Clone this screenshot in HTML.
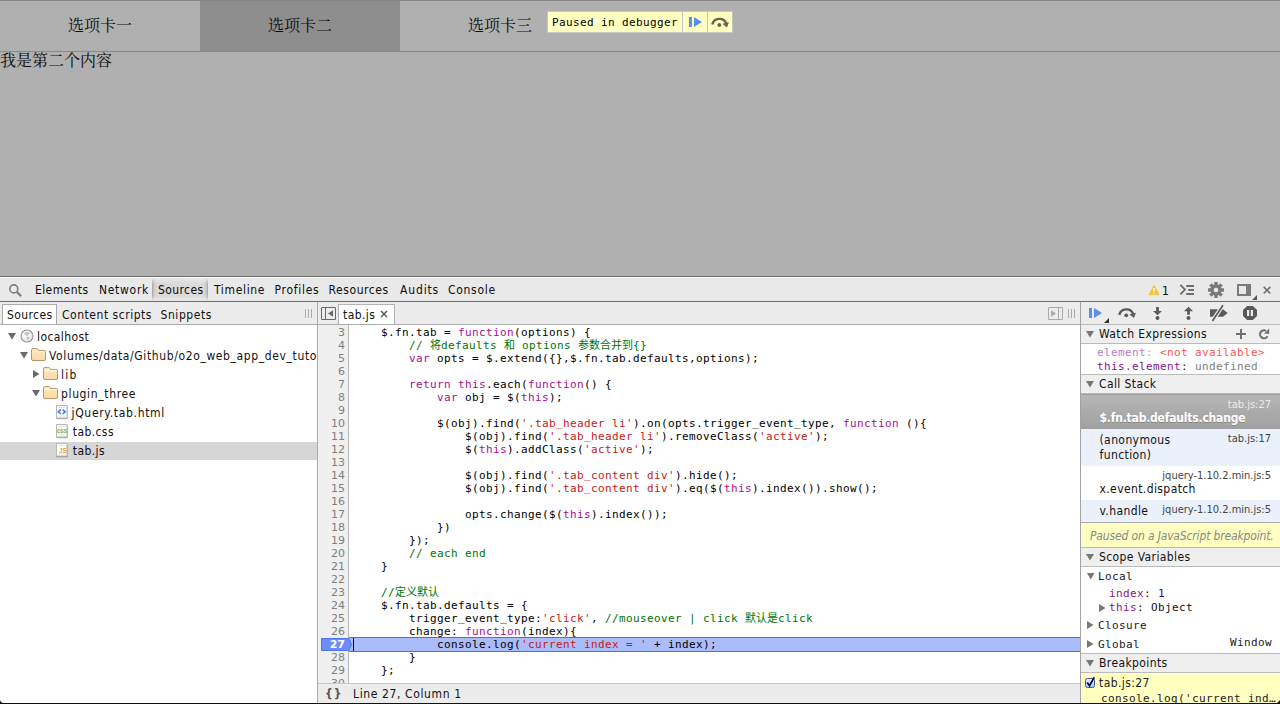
<!DOCTYPE html>
<html lang="zh">
<head>
<meta charset="utf-8">
<title>tab</title>
<style>
html,body{margin:0;padding:0;}
body{width:1280px;height:704px;overflow:hidden;position:relative;background:#fff;
  font-family:"DejaVu Sans Condensed","Liberation Sans","Noto Sans CJK SC",sans-serif;font-size:12px;color:#111;letter-spacing:.4px;}
*{box-sizing:border-box;}
svg{position:absolute;overflow:visible;z-index:3;}
.mono{font-family:"DejaVu Sans Mono","Liberation Mono","Noto Sans CJK SC",monospace;font-size:11px;letter-spacing:.377px;white-space:pre;}
/* ---------- page ---------- */
#page{position:absolute;left:0;top:0;width:1280px;height:276px;background:#b0b0b0;letter-spacing:0;
  font-family:"Liberation Serif","Noto Serif CJK SC",serif;font-size:16px;color:#0a0a0a;}
#page .hdr{position:absolute;left:0;top:0;width:1280px;height:52px;border-top:1px solid #858585;border-bottom:1px solid #8a8a8a;}
#page .hdr div{position:absolute;top:0;width:200px;height:50px;line-height:50px;text-align:center;}
#page .hdr .on{background:#8e8e8e;}
#page .cnt{position:absolute;left:0;top:52px;line-height:18px;}
#paused{position:absolute;left:547px;top:11px;height:22px;width:186px;background:#ffffc2;border:1px solid #c6c6c6;color:#000;}
#paused span{position:absolute;left:4px;top:1px;line-height:20px;}
#paused i{position:absolute;top:0;width:1px;height:20px;background:#c6c6c6;}
/* ---------- devtools ---------- */
#dt{position:absolute;left:0;top:276px;width:1280px;height:428px;background:#fff;border-top:1px solid #6e6e6e;}
#tb{position:absolute;left:0;top:0;width:1280px;height:25px;background:#e9e9e9;box-shadow:inset 0 1px 0 #fafafa;border-bottom:1px solid #6c6c6c;}
#tb .t{position:absolute;top:1px;line-height:24px;white-space:pre;color:#0c0c0c;}
#tb .sel{position:absolute;left:152px;top:1px;width:56px;height:23px;
  background:linear-gradient(#e9e9e9,rgba(233,233,233,0) 6px,rgba(233,233,233,0) 17px,#e9e9e9),
  linear-gradient(to right,rgba(0,0,0,.30),rgba(0,0,0,.12) 2px,rgba(0,0,0,.07) 5px,rgba(0,0,0,.06) 51px,rgba(0,0,0,.12) 54px,rgba(0,0,0,.30));}
/* second row */
.row2{position:absolute;top:25px;height:23px;background:#ececec;border-bottom:1px solid #aaa;}
#nav{position:absolute;left:0;top:25px;width:318px;height:402px;border-right:1px solid #aaa;background:#fff;}
#nav .tabs{left:0;top:0;width:317px;}
.tt{position:absolute;top:2px;line-height:22px;color:#111;white-space:pre;}
#nav .tabs .cur{position:absolute;left:2px;top:2px;width:55px;height:20px;background:#fff;border:1px solid #aaa;border-bottom:none;}
.tree .r{position:absolute;left:0;width:317px;height:19px;line-height:19px;white-space:pre;overflow:hidden;}
.tree .r span{position:absolute;top:1px;}
.tree .r.sel{background:linear-gradient(#d6d6d6,#d6d6d6) 0 1px/100% 18px no-repeat;}
/* editor */
#ed{position:absolute;left:318px;top:25px;width:762px;height:402px;background:#fff;}
#ed .tabs{left:0;top:0;width:762px;}
#ed .ftab{position:absolute;left:20px;top:2px;width:57px;height:20px;background:#fff;border:1px solid #b4b4b4;border-bottom:none;}
#code{position:absolute;left:0;top:23px;width:762px;height:358px;overflow:hidden;background:#fff;}
#code .gut{position:absolute;left:0;top:0;width:31px;height:358px;background:#f0f0f0;border-right:1px solid #b6b6b6;}
#code .l{position:absolute;left:0;width:762px;height:13px;line-height:13px;padding-left:35px;color:#000;z-index:2;
  font-family:"DejaVu Sans Mono","Liberation Mono","Noto Sans CJK SC",monospace;font-size:11px;letter-spacing:.377px;white-space:pre;}
#code .l i{position:absolute;left:0;top:0;width:27px;text-align:right;font-style:normal;color:#808080;letter-spacing:0;
  font-family:"DejaVu Sans","Liberation Sans",sans-serif;font-size:11px;}
#code .l b{font-weight:normal;letter-spacing:0;}
#code .l u{text-decoration:none;position:relative;top:-1px;}
#code .k{color:#aa0d91;}#code .s{color:#c41a16;}#code .c{color:#007400;}
#code .bp i{color:#fff;font-weight:bold;}
#code .hl{position:absolute;left:31px;top:312px;width:731px;height:15px;background:#abbcfb;border-top:1px solid #4470f2;border-bottom:1px solid #4470f2;}
#code .cur{position:absolute;left:35px;top:313px;width:1px;height:13px;background:#000;z-index:4;}
#status{position:absolute;left:0;top:381px;width:762px;height:21px;background:#ececec;border-top:1px solid #c8c8c8;line-height:20px;}
/* sidebar */
#sb{position:absolute;left:1080px;top:25px;width:200px;height:402px;border-left:1px solid #a2a2a2;background:#fff;}
#sb .row2{left:0;top:0;width:199px;border-bottom:none;}
.pt{position:absolute;left:0;width:199px;height:20px;background:#efefef;border-top:1px solid #bbb;border-bottom:1px solid #bbb;line-height:18px;padding-left:18px;color:#111;}
#sb .a{position:absolute;white-space:pre;}
.nm{color:#881391;}
.cf{position:absolute;left:0;width:199px;}
.cf .n{position:absolute;left:18.500px;white-space:pre;line-height:14px;}
.cf .lk{position:absolute;right:9px;white-space:pre;font-size:11px;letter-spacing:0;color:#444;line-height:14px;}
#bottom{position:absolute;left:0;top:703px;width:1280px;height:1px;background:#111;}
</style>
</head>
<body>
<div id="page">
  <div class="hdr">
    <div style="left:0">选项卡一</div>
    <div class="on" style="left:200px">选项卡二</div>
    <div style="left:400px">选项卡三</div>
  </div>
  <div class="cnt">我是第二个内容</div>
  <div id="paused"><span class="mono">Paused in debugger</span><i style="left:134px"></i><i style="left:159px"></i>
    <svg style="left:141px;top:5px" width="13" height="10" viewBox="0 0 13 10"><path d="M0 0h3v10h-3zM5 0l8 5l-8 5z" fill="#5b8ee8"/></svg>
    <svg style="left:163px;top:4px" width="19" height="12" viewBox="0 0 19 12"><path d="M1.300 8.500A7.300 7.300 0 0 1 15.200 7.500" fill="none" stroke="#65654d" stroke-width="2.400"/><path d="M11.400 7.800l6.500-1.500l-1.900 5.200z" fill="#65654d"/><circle cx="8.300" cy="9" r="1.900" fill="#65654d"/></svg>
  </div>
</div>
<div id="dt">
  <div id="tb">
    <svg style="left:8px;top:6px" width="15" height="15" viewBox="8 283 15 15"><circle cx="13.8" cy="288.9" r="4" fill="none" stroke="#7f7f7f" stroke-width="1.6"/><path d="M16.8 291.9l4.3 4.3" stroke="#7f7f7f" stroke-width="2.2" fill="none"/></svg>
    <svg style="left:1148px;top:7px" width="12" height="12" viewBox="1148 284 12 12"><path d="M1154 285l5.2 9.8h-10.4z" fill="#f3c530" stroke="#f3c530" stroke-width=".6" stroke-linejoin="round"/><path d="M1153.3 288h1.4v3.6h-1.4zM1153.3 292.4h1.4v1.3h-1.4z" fill="#fff"/></svg>
    <svg style="left:1179px;top:7px" width="16" height="12" viewBox="1179 284 16 12"><path d="M1180.4 284.8l4.6 4.800l-4.600 4.800" fill="none" stroke="#6e6e6e" stroke-width="1.800"/><path d="M1186.200 285h7.800v2h-7.800zM1188.300 289h5.700v2h-5.700zM1186.200 293h7.800v2h-7.800z" fill="#6e6e6e"/></svg>
    <svg style="left:1207px;top:4px" width="18" height="18" viewBox="-9 -9 18 18"><g fill="#7a7a7a"><path fill-rule="evenodd" d="M0-5.600a5.600 5.600 0 1 0 .001 0zM0-2.300a2.300 2.300 0 1 1-.001 0z"/><g><rect x="-1.700" y="-8" width="3.400" height="3.400"/><rect x="-1.700" y="4.600" width="3.400" height="3.400"/><rect x="-8" y="-1.700" width="3.400" height="3.400"/><rect x="4.600" y="-1.700" width="3.400" height="3.400"/></g><g transform="rotate(45)"><rect x="-1.700" y="-8" width="3.400" height="3.400"/><rect x="-1.700" y="4.600" width="3.400" height="3.400"/><rect x="-8" y="-1.700" width="3.400" height="3.400"/><rect x="4.600" y="-1.700" width="3.400" height="3.400"/></g></g></svg>
    <svg style="left:1237px;top:7px" width="21" height="16" viewBox="1237 284 21 16"><path fill-rule="evenodd" d="M1237 284h14v12h-14zM1239 286v8h7v-8z" fill="#7a7a7a"/><path d="M1257 295v5h-5z" fill="#555"/></svg>
    <svg style="left:1263px;top:9px" width="8" height="8" viewBox="1263 286 8 8"><path d="M1263.700 286.900l6.600 6.600M1270.300 286.900l-6.600 6.600" stroke="#6e6e6e" stroke-width="1.500" fill="none"/></svg>

    <div class="sel"></div>
    <div class="t" style="left:35px">Elements</div>
    <div class="t" style="left:99px;letter-spacing:.7px">Network</div>
    <div class="t" style="left:158px">Sources</div>
    <div class="t" style="left:214px;letter-spacing:.65px">Timeline</div>
    <div class="t" style="left:274.500px;letter-spacing:.72px">Profiles</div>
    <div class="t" style="left:328.500px;letter-spacing:.58px">Resources</div>
    <div class="t" style="left:400px;letter-spacing:.85px">Audits</div>
    <div class="t" style="left:448px;letter-spacing:.7px">Console</div>
    <div class="t" style="left:1162px;top:2px;letter-spacing:0">1</div>
  </div>
  <!-- navigator -->
  <div id="nav">
    <div class="row2 tabs" style="top:0">
      <div class="cur"></div>
      <div class="tt" style="left:7px">Sources</div>
      <div class="tt" style="left:62px;letter-spacing:.53px">Content scripts</div>
      <div class="tt" style="left:160.500px;letter-spacing:.58px">Snippets</div>
    </div>
    <div class="tree">
      <svg width="0" height="0" style="left:0;top:0"><defs><linearGradient id="fg" x1="0" y1="0" x2="0" y2="1"><stop offset="0" stop-color="#ffeac8"/><stop offset="1" stop-color="#fad8a3"/></linearGradient><radialGradient id="gg" cx=".4" cy=".35" r=".7"><stop offset="0" stop-color="#fff"/><stop offset="1" stop-color="#e2e2e2"/></radialGradient></defs></svg>
      <svg style="left:305px;top:7px" width="8" height="9" viewBox="0 0 8 9"><path d="M.5 0v9M3.5 0v9M6.5 0v9" stroke="#aaa" stroke-width="1" fill="none"/></svg>
      <svg style="left:8px;top:30.80000000000001px" width="8" height="6.5" viewBox="0 0 8 6.5"><path d="M0 0h8l-4.0 6.5z" fill="#6b6b6b"/></svg>
      <svg style="left:20px;top:27px" width="14" height="14" viewBox="0 0 14 14"><circle cx="7" cy="7" r="6" fill="url(#gg)" stroke="#9b9b9b" stroke-width="1.200"/><path d="M3.800 4.700q1.400-2.200 4-2q1.900.2 2.300 1.600q-1.100.2-1.600 1.200q-.3 1.300-1.600 1.700q-1-.3-1.200-1.300q-1.300-.1-1.900-1.200zM6.400 8q1.900-.5 3.200.7q-.2 1.600-1.600 2.700q-1-.7-1-1.800q-.7-.8-.6-1.600z" fill="#c6c6c6"/></svg>
      <svg style="left:20px;top:49.80000000000001px" width="8" height="6.5" viewBox="0 0 8 6.5"><path d="M0 0h8l-4.0 6.5z" fill="#6b6b6b"/></svg>
      <svg style="left:31px;top:46px" width="15" height="13" viewBox="0 0 15 13"><path d="M.5 2.200q0-1.700 1.600-1.700h3.600q1 0 1.400 1l.4.900h5.500q1.500 0 1.500 1.500v7.100q0 1.500-1.500 1.500h-11q-1.500 0-1.500-1.500z" fill="url(#fg)" stroke="#b99767" stroke-width="1"/><path d="M1.500 3.500h12" stroke="#fff6e2" stroke-width="1" fill="none" opacity=".9"/></svg>
      <svg style="left:33px;top:68px" width="6.5" height="8" viewBox="0 0 6.5 8"><path d="M0 0l6.5 4.0l-6.5 4.0z" fill="#6b6b6b"/></svg>
      <svg style="left:43px;top:65px" width="15" height="13" viewBox="0 0 15 13"><path d="M.5 2.200q0-1.700 1.600-1.700h3.600q1 0 1.400 1l.4.900h5.500q1.500 0 1.500 1.500v7.100q0 1.500-1.500 1.500h-11q-1.500 0-1.500-1.500z" fill="url(#fg)" stroke="#b99767" stroke-width="1"/><path d="M1.500 3.500h12" stroke="#fff6e2" stroke-width="1" fill="none" opacity=".9"/></svg>
      <svg style="left:32px;top:87.80000000000001px" width="8" height="6.5" viewBox="0 0 8 6.5"><path d="M0 0h8l-4.0 6.5z" fill="#6b6b6b"/></svg>
      <svg style="left:43px;top:84px" width="15" height="13" viewBox="0 0 15 13"><path d="M.5 2.200q0-1.700 1.600-1.700h3.600q1 0 1.400 1l.4.900h5.500q1.500 0 1.500 1.500v7.100q0 1.500-1.500 1.500h-11q-1.500 0-1.500-1.500z" fill="url(#fg)" stroke="#b99767" stroke-width="1"/><path d="M1.500 3.500h12" stroke="#fff6e2" stroke-width="1" fill="none" opacity=".9"/></svg>
      <svg style="left:56px;top:103px" width="13" height="15" viewBox="0 0 13 15"><rect x=".5" y=".5" width="10.500" height="12.500" fill="#fdfdfd" stroke="#b9b9b9"/><path d="M.3 13.700h11.400" stroke="#8f8f8f" stroke-width="1" fill="none" opacity=".75"/><path d="M11.600 1v12.500" stroke="#9a9a9a" stroke-width=".8" fill="none" opacity=".6"/><path d="M2.800 2.500h6M2.800 11h6" stroke="#d2d2d2" stroke-width="1.200" stroke-dasharray="1.500 .7" fill="none"/><path d="M4.900 4.600L2.300 6.800l2.600 2.200M6.600 4.600L9.200 6.800L6.600 9" fill="none" stroke="#3d7be6" stroke-width="1.600"/></svg>
      <svg style="left:56px;top:122px" width="13" height="15" viewBox="0 0 13 15"><rect x=".5" y=".5" width="10.500" height="12.500" fill="#fdfdfd" stroke="#b9b9b9"/><path d="M.3 13.700h11.400" stroke="#8f8f8f" stroke-width="1" fill="none" opacity=".75"/><path d="M11.600 1v12.500" stroke="#9a9a9a" stroke-width=".8" fill="none" opacity=".6"/><path d="M2.800 2.500h6M2.800 11h6" stroke="#d2d2d2" stroke-width="1.200" stroke-dasharray="1.500 .7" fill="none"/><text x="5.800" y="9" font-family="Liberation Sans,sans-serif" font-size="6.400" font-weight="bold" fill="#74b854" text-anchor="middle" letter-spacing="-.2">css</text></svg>
      <svg style="left:56px;top:141px" width="13" height="15" viewBox="0 0 13 15"><rect x=".5" y=".5" width="10.500" height="12.500" fill="#fdfdfd" stroke="#b9b9b9"/><path d="M.3 13.700h11.400" stroke="#8f8f8f" stroke-width="1" fill="none" opacity=".75"/><path d="M11.600 1v12.500" stroke="#9a9a9a" stroke-width=".8" fill="none" opacity=".6"/><path d="M2.800 2.500h6M2.800 11h6" stroke="#d2d2d2" stroke-width="1.200" stroke-dasharray="1.500 .7" fill="none"/><text x="6.800" y="10.200" font-family="Liberation Sans,sans-serif" font-size="6.400" font-weight="bold" fill="#f1a232" text-anchor="middle" letter-spacing="-.2">JS</text></svg>
      <div class="r" style="top:25px"><span style="left:37px">localhost</span></div>
      <div class="r" style="top:44px"><span style="left:49px;letter-spacing:.62px">Volumes/data/Github/o2o_web_app_dev_tutorial</span></div>
      <div class="r" style="top:63px"><span style="left:61px;letter-spacing:1.200px">lib</span></div>
      <div class="r" style="top:82px"><span style="left:61px;letter-spacing:.64px">plugin_three</span></div>
      <div class="r" style="top:101px"><span style="left:71.500px;letter-spacing:.68px">jQuery.tab.html</span></div>
      <div class="r" style="top:120px"><span style="left:72.800px">tab.css</span></div>
      <div class="r sel" style="top:139px"><span style="left:72.800px">tab.js</span></div>
    </div>
  </div>
  <!-- editor -->
  <div id="ed">
    <div class="row2 tabs">
      <div class="ftab"></div>
      <svg style="left:3px;top:5px" width="15" height="13" viewBox="0 0 15 13"><path d="M.5.5h14v12h-14zM4.500.5v12" fill="none" stroke="#6a6a6a"/><path d="M12 3.200v6.600l-5-3.300z" fill="#6a6a6a"/></svg>
      <svg style="left:62px;top:8px" width="8" height="8" viewBox="0 0 8 8"><path d="M1 1l6 6M7 1l-6 6" stroke="#5a5a5a" stroke-width="1.500" fill="none"/></svg>
      <svg style="left:730px;top:5px" width="15" height="13" viewBox="0 0 15 13"><path d="M.5.5h14v12h-14zM10.500.5v12" fill="none" stroke="#aaa"/><path d="M3 3.200v6.600l5-3.300z" fill="#aaa"/></svg>
      <svg style="left:750px;top:7px" width="8" height="9" viewBox="0 0 8 9"><path d="M.5 0v9M3.5 0v9M6.5 0v9" stroke="#aaa" stroke-width="1" fill="none"/></svg>

      <div class="tt" style="left:25px">tab.js</div>
    </div>
    <div id="code">
      <div class="gut"></div>
      <div class="hl"></div><div class="cur"></div>
      <svg style="left:3px;top:313px;z-index:1" width="31" height="13" viewBox="0 0 31 13"><path d="M.5.5h27.300l2.700 6l-2.700 6h-27.300z" fill="#6c8cf8" stroke="#4a74f2"/></svg>
<div class="l" style="top:1px"><i>3</i>    $.fn.tab = <span class="k">function</span>(options) {</div>
<div class="l" style="top:14px"><i>4</i>        <span class="c">// <b>将</b>defaults <b>和</b> options <b>参数合并到</b>{}</span></div>
<div class="l" style="top:27px"><i>5</i>        <span class="k">var</span> opts = $.extend({},$.fn.tab.defaults,options);</div>
<div class="l" style="top:40px"><i>6</i></div>
<div class="l" style="top:53px"><i>7</i>        <span class="k">return</span> <span class="k">this</span>.each(<span class="k">function</span>() {</div>
<div class="l" style="top:66px"><i>8</i>            <span class="k">var</span> obj = $(<span class="k">this</span>);</div>
<div class="l" style="top:79px"><i>9</i></div>
<div class="l" style="top:92px"><i>10</i>            $(obj).find(<span class="s">'.tab<u>_</u>header li'</span>).on(opts.trigger<u>_</u>event<u>_</u>type, <span class="k">function</span> (){</div>
<div class="l" style="top:105px"><i>11</i>                $(obj).find(<span class="s">'.tab<u>_</u>header li'</span>).removeClass(<span class="s">'active'</span>);</div>
<div class="l" style="top:118px"><i>12</i>                $(<span class="k">this</span>).addClass(<span class="s">'active'</span>);</div>
<div class="l" style="top:131px"><i>13</i></div>
<div class="l" style="top:144px"><i>14</i>                $(obj).find(<span class="s">'.tab<u>_</u>content div'</span>).hide();</div>
<div class="l" style="top:157px"><i>15</i>                $(obj).find(<span class="s">'.tab<u>_</u>content div'</span>).eq($(<span class="k">this</span>).index()).show();</div>
<div class="l" style="top:170px"><i>16</i></div>
<div class="l" style="top:183px"><i>17</i>                opts.change($(<span class="k">this</span>).index());</div>
<div class="l" style="top:196px"><i>18</i>            })</div>
<div class="l" style="top:209px"><i>19</i>        });</div>
<div class="l" style="top:222px"><i>20</i>        <span class="c">// each end</span></div>
<div class="l" style="top:235px"><i>21</i>    }</div>
<div class="l" style="top:248px"><i>22</i></div>
<div class="l" style="top:261px"><i>23</i>    <span class="c">//<b>定义默认</b></span></div>
<div class="l" style="top:274px"><i>24</i>    $.fn.tab.defaults = {</div>
<div class="l" style="top:287px"><i>25</i>        trigger<u>_</u>event<u>_</u>type:<span class="s">'click'</span>, <span class="c">//mouseover | click <b>默认是</b>click</span></div>
<div class="l" style="top:300px"><i>26</i>        change: <span class="k">function</span>(index){</div>
<div class="l bp" style="top:313px"><i>27</i>            console.log(<span class="s">'current index = '</span> + index);</div>
<div class="l" style="top:326px"><i>28</i>        }</div>
<div class="l" style="top:339px"><i>29</i>    };</div>
<div class="l" style="top:352px"><i>30</i></div>
    </div>
    <div id="status"><span style="position:absolute;left:7px;top:0;font-weight:bold;color:#555;letter-spacing:1px">{}</span><span style="position:absolute;left:35px;top:0;white-space:pre;letter-spacing:.62px">Line 27, Column 1</span></div>
  </div>
  <!-- sidebar -->
  <div id="sb">
    <div class="row2">
      <svg style="left:8px;top:6px" width="21" height="16" viewBox="1089 308 21 16"><path d="M1089 308h3v10h-3zM1094 308l8 5l-8 5z" fill="#5b8ee8"/><path d="M1109 318v5h-5z" fill="#333"/></svg>
      <svg style="left:36px;top:5px" width="20" height="13" viewBox="1117 307 20 13"><path d="M1119.300 315A7.300 7.300 0 0 1 1133.200 314" fill="none" stroke="#5a5a5a" stroke-width="2.400"/><path d="M1129.400 314.300l6.500-1.500l-1.900 5.200z" fill="#5a5a5a"/><circle cx="1126.200" cy="315.300" r="1.900" fill="#5a5a5a"/></svg>
      <svg style="left:71px;top:4px" width="11" height="15" viewBox="1152 306 11 15"><path d="M1156.100 307h2.800v4h3.100l-4.500 4.300l-4.500-4.300h3.100z" fill="#5a5a5a"/><circle cx="1157.500" cy="318" r="2" fill="#5a5a5a"/></svg>
      <svg style="left:102px;top:4px" width="11" height="15" viewBox="1183 306 11 15"><path d="M1188.500 306.800l4.600 4.400h-3.200v3.600h-2.800v-3.600h-3.200z" fill="#5a5a5a"/><circle cx="1188.500" cy="318" r="2" fill="#5a5a5a"/></svg>
      <svg style="left:128px;top:2px" width="20" height="18" viewBox="1209 304 20 18"><path d="M1210 309.200h13l4.700 3.800l-4.700 3.800h-13z" fill="#5a5a5a"/><path d="M1223.400 304.700l-11.300 16.600" stroke="#ececec" stroke-width="4" fill="none"/><path d="M1223 305.300l-10.600 15.600" stroke="#5a5a5a" stroke-width="1.700" fill="none"/></svg>
      <svg style="left:162px;top:4px" width="14" height="14" viewBox="0 0 14 14"><path d="M4.100 0h5.800l4.100 4.100v5.800l-4.100 4.100h-5.800l-4.100-4.100v-5.800z" fill="#5a5a5a"/><path d="M4 4h2.200v6h-2.200zM7.800 4h2.200v6h-2.200z" fill="#ececec"/></svg>
    </div>
    <svg style="left:5px;top:29px" width="8" height="6.5" viewBox="0 0 8 6.5"><path d="M0 0h8l-4.0 6.5z" fill="#777"/></svg>
    <svg style="left:5px;top:79px" width="8" height="6.5" viewBox="0 0 8 6.5"><path d="M0 0h8l-4.0 6.5z" fill="#777"/></svg>
    <svg style="left:5px;top:252px" width="8" height="6.5" viewBox="0 0 8 6.5"><path d="M0 0h8l-4.0 6.5z" fill="#777"/></svg>
    <svg style="left:5px;top:358px" width="8" height="6.5" viewBox="0 0 8 6.5"><path d="M0 0h8l-4.0 6.5z" fill="#777"/></svg>
    <svg style="left:155px;top:27px" width="10" height="10" viewBox="0 0 10 10"><path d="M0 5h10M5 0v10" stroke="#707070" stroke-width="2" fill="none"/></svg>
    <svg style="left:177px;top:26px" width="12" height="12" viewBox="1258 328 12 12"><path d="M1267.500 336.300A4 4 0 1 1 1266 330.800" fill="none" stroke="#707070" stroke-width="2.100"/><path d="M1269.200 328.600v5.200h-5.200z" fill="#707070"/></svg>
    <svg style="left:5.5px;top:271px" width="7.5" height="6.5" viewBox="0 0 7.5 6.5"><path d="M0 0h7.5l-3.75 6.5z" fill="#777"/></svg>
    <svg style="left:18px;top:302px" width="6.5" height="8" viewBox="0 0 6.5 8"><path d="M0 0l6.5 4.0l-6.5 4.0z" fill="#777"/></svg>
    <svg style="left:6px;top:319px" width="6.5" height="8" viewBox="0 0 6.5 8"><path d="M0 0l6.5 4.0l-6.5 4.0z" fill="#777"/></svg>
    <svg style="left:6px;top:338px" width="6.5" height="8" viewBox="0 0 6.5 8"><path d="M0 0l6.5 4.0l-6.5 4.0z" fill="#777"/></svg>
    <div class="pt" style="top:22px">Watch Expressions</div>
    <div class="a mono" style="left:16px;top:44px;line-height:14px"><span style="color:#b97cc4">element</span><span style="color:#aaa">: </span><span style="color:#f55">&lt;not available&gt;</span></div>
    <div class="a mono" style="left:16px;top:58px;line-height:14px"><span class="nm">this.element</span><span style="color:#222">: </span><span style="color:#808080">undefined</span></div>
    <div class="pt" style="top:72px">Call Stack</div>
    <div class="cf" style="top:92px;height:35px;background:linear-gradient(#9b9b9b,#9b9b9b 1px,#b6b6b6 1px,#a0a0a0);color:#fff">
      <div class="lk" style="top:4px;color:#ebebeb">tab.js:27</div>
      <div class="n" style="top:17px;font-weight:bold;letter-spacing:-.2px;text-shadow:0 1px 0 rgba(0,0,0,.2)">$.fn.tab.defaults.change</div>
    </div>
    <div class="cf" style="top:127px;height:37px;background:#ebf1fb">
      <div class="lk" style="top:3px">tab.js:17</div>
      <div class="n" style="top:4px">(anonymous</div>
      <div class="n" style="top:19px">function)</div>
    </div>
    <div class="cf" style="top:164px;height:34px;background:#fff">
      <div class="lk" style="top:3px">jquery-1.10.2.min.js:5</div>
      <div class="n" style="top:16px">x.event.dispatch</div>
    </div>
    <div class="cf" style="top:198px;height:22px;background:#ebf1fb">
      <div class="lk" style="top:3px">jquery-1.10.2.min.js:5</div>
      <div class="n" style="top:4px">v.handle</div>
    </div>
    <div class="cf" style="top:220px;height:25px;background:#ffffc2;border-top:1px solid #aaa;color:#888;font-style:italic"><div class="a" style="left:9px;top:1px;line-height:25px;letter-spacing:-.15px">Paused on a JavaScript breakpoint.</div></div>
    <div class="pt" style="top:245px">Scope Variables</div>
    <div class="a mono" style="left:17px;top:268px;line-height:14px;color:#222">Local</div>
    <div class="a mono" style="left:28px;top:285px;line-height:14px"><span class="nm">index</span><span>: </span><span style="color:#1c00cf">1</span></div>
    <div class="a mono" style="left:28px;top:299px;line-height:14px"><span class="nm">this</span><span>: Object</span></div>
    <div class="a mono" style="left:17px;top:317px;line-height:14px;color:#222">Closure</div>
    <div class="a mono" style="left:17px;top:336px;line-height:14px;color:#222">Global</div>
    <div class="a mono" style="left:149px;top:334px;line-height:14px;color:#222">Window</div>
    <div class="pt" style="top:351px">Breakpoints</div>
    <div class="cf" style="top:371px;height:32px;background:#ffffc2">
      <svg style="left:3px;top:3px" width="12" height="12" viewBox="1084 676 12 12"><defs><linearGradient id="cbg" x1="0" y1="0" x2="0" y2="1"><stop offset="0" stop-color="#e2eeff"/><stop offset="1" stop-color="#9fcbff"/></linearGradient></defs><rect x="1085.500" y="678.500" width="9" height="9" rx="2" fill="url(#cbg)" stroke="#4e4ea0"/><path d="M1087.200 682.600l2.300 3l4.800-8.300" fill="none" stroke="#0a1030" stroke-width="1.700"/></svg>
      <div class="a" style="left:18px;top:3px;line-height:14px;color:#222">tab.js:27</div>
      <div class="a mono" style="left:20px;top:19px;line-height:14px;color:#222">console.log('current ind…</div>
    </div>
  </div>
</div>
<div id="bottom"></div>
<svg style="left:0;top:700px" width="4" height="4" viewBox="0 0 4 4"><path d="M0 0q.3 2.700 3 3h-3z" fill="#111"/></svg>
<svg style="left:1277px;top:700px" width="3" height="3" viewBox="0 0 3 3"><path d="M3 0v3h-3z" fill="#222"/></svg>
</body>
</html>
